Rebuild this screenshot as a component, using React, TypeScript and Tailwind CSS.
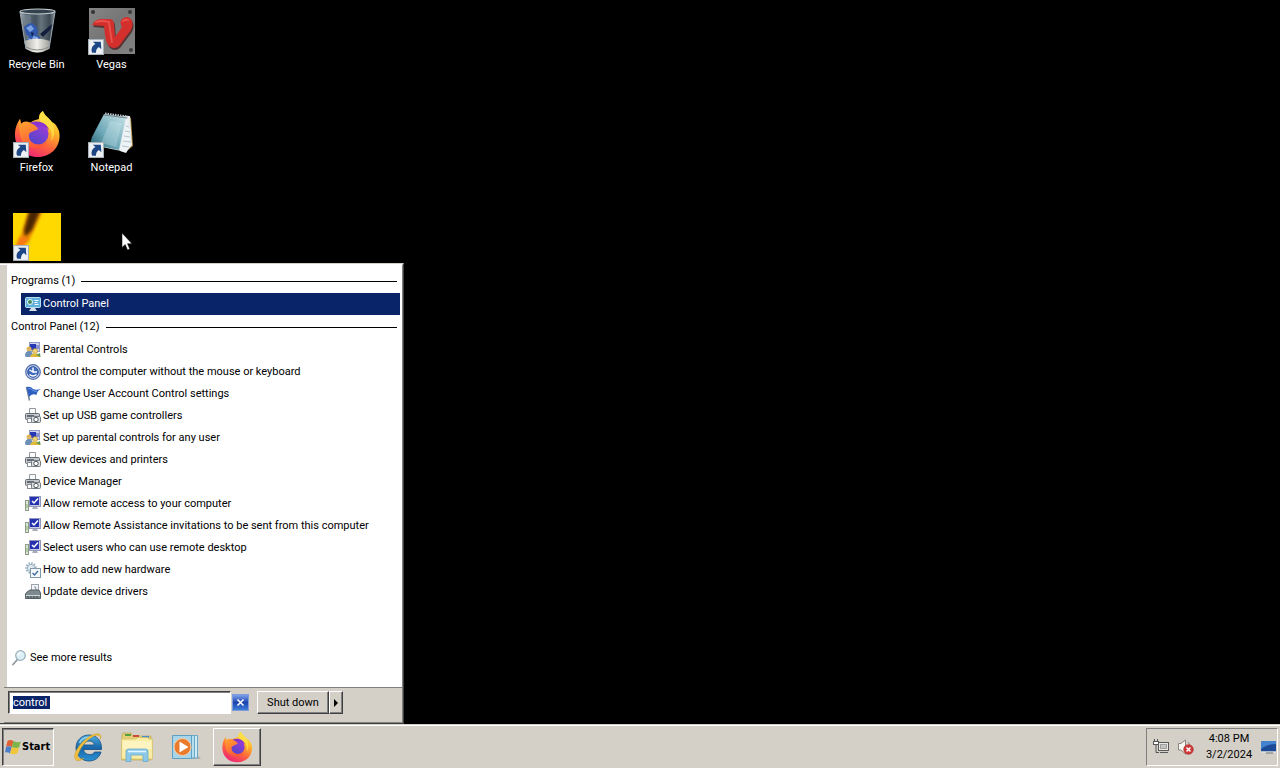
import { useEffect, useRef, useState } from "react";
import type { ReactNode } from "react";

type IconProps = { className?: string };

function RecycleBinIcon({ className }: IconProps) {
  return (
    <svg viewBox="0 0 48 48" className={className} aria-hidden="true">
      <defs>
        <linearGradient id="binGlass" x1="0" x2="1">
          <stop offset="0" stopColor="#a4afb6" />
          <stop offset=".15" stopColor="#5c6b76" />
          <stop offset=".45" stopColor="#42515c" />
          <stop offset=".6" stopColor="#66747e" />
          <stop offset=".85" stopColor="#3d4952" />
          <stop offset="1" stopColor="#8a969e" />
        </linearGradient>
        <linearGradient id="binBase" x1="0" x2="1">
          <stop offset="0" stopColor="#a8a8a4" />
          <stop offset=".5" stopColor="#f1f0ea" />
          <stop offset="1" stopColor="#9c9d9a" />
        </linearGradient>
      </defs>
      <path d="M7 4 L42 4 L36 42 Q24 49 13 42 Z" fill="url(#binGlass)" />
      <path d="M10 8 L18 8 L19 34 L14 34 Z" fill="#b8c6cf" opacity=".2" />
      <path d="M11 20 l4-3 4-1 4 3 2 5 -1 4 3 2 1 5 -5 3 -5-1 -4-3 2-4 -3-3z" fill="#3159ae" />
      <path d="M13 21 l5-3 3 4 -4 3z M20 29 l5 1 -1 5 -5-2z M15 31 l3 1 -1 3z" fill="#7ea3e3" />
      <path d="M18 25 l3 1 -2 4z" fill="#14244f" />
      <path d="M39 17 L27 27 L30 30 L38 22 Z" fill="#131f3d" />
      <path d="M11 34 Q24 29 37 34 L36 42 Q24 49 13 42 Z" fill="url(#binBase)" />
      <path d="M13 40 Q24 46 36 40" fill="none" stroke="#8c8c88" strokeWidth="1" />
      <ellipse cx="24.500" cy="4.500" rx="17.500" ry="2.500" fill="#34424d" stroke="#c5ced3" strokeWidth="1.200" />
      <path d="M7 5 L13 42 M42 5 L36 42" stroke="#9ba8b1" strokeWidth="1" />
    </svg>
  );
}

function VegasIcon({ className }: IconProps) {
  const letter =
    "M4 18 Q7 12 13 12 L21 12 Q26 12 26 17 L27 30 L34 20 Q31 15 34 12 Q39 8 43 12 Q46 16 43 23 L31 39 Q26 43 21 39 Q18 36 17 28 L16 19 Z";
  return (
    <svg viewBox="0 0 48 48" className={className} aria-hidden="true">
      <defs>
        <linearGradient id="vgPlate" x1="0" y1="0" x2="1" y2="1">
          <stop offset="0" stopColor="#858585" />
          <stop offset=".45" stopColor="#757675" />
          <stop offset="1" stopColor="#828382" />
        </linearGradient>
      </defs>
      <rect x="1" y="1" width="46" height="46" fill="url(#vgPlate)" />
      <circle cx="5" cy="5" r="2" fill="#343434" />
      <circle cx="42" cy="5" r="2" fill="#3d3d3d" />
      <circle cx="43" cy="43" r="2" fill="#3d3d3d" />
      <path d={letter} fill="#4d2222" transform="translate(1 2)" opacity=".8" />
      <path d={letter} fill="#d32f2c" />
      <path d="M8 15 Q13 13 21 15 Q22 24 24 35 M35 14 Q38 12 40 13" fill="none" stroke="#ea544d" strokeWidth="1.800" strokeLinecap="round" />
    </svg>
  );
}

function FirefoxIcon({ className }: IconProps) {
  return (
    <svg viewBox="0 0 48 48" className={className} aria-hidden="true">
      <defs>
        <linearGradient id="ffBody" x1=".8" y1="0" x2=".3" y2="1">
          <stop offset="0" stopColor="#fff14a" />
          <stop offset=".35" stopColor="#ffb329" />
          <stop offset=".65" stopColor="#ff653b" />
          <stop offset="1" stopColor="#ed207a" />
        </linearGradient>
        <linearGradient id="ffGlobe" x1=".8" y1="0" x2=".2" y2="1">
          <stop offset="0" stopColor="#a13bd8" />
          <stop offset="1" stopColor="#4c47c9" />
        </linearGradient>
        <linearGradient id="ffTail" x1="0" y1="0" x2=".4" y2="1">
          <stop offset="0" stopColor="#ffab2d" />
          <stop offset="1" stopColor="#ff5839" />
        </linearGradient>
      </defs>
      <path d="M30 1 C31 5 36 8 39 12 C42 13 44 16 46 21 C49 34 40 47 25 47 C11 47 2 37 2 25 C2 18 4 13 7 9 L8 14 C11 11 14 11 17 13 C22 8 27 11 26 7 C26 4 28 2 30 1Z" fill="url(#ffBody)" />
      <path d="M30 1 C31 6 37 8 39 13 C43 20 41 28 38 31 C41 21 35 15 29 13 C25 11 26 4 30 1Z" fill="#ffe34a" opacity=".75" />
      <circle cx="25" cy="24" r="10.500" fill="url(#ffGlobe)" />
      <path d="M7 9 L8 14 C12 11 17 12 20 14 C23 16 25 18 25 19 C22 21 18 21 16 24 C15 30 19 34 26 35 C31 35 34 31 34 31 C31 38 24 40 17 37 C10 34 7 29 7 23 C6 18 5 13 7 9Z" fill="url(#ffTail)" />
      <path d="M17 13 C27 9 34 14 36 20 C32 16 28 16 24 16Z" fill="#8a35cf" />
    </svg>
  );
}

function NotepadIcon({ className }: IconProps) {
  return (
    <svg viewBox="0 0 48 48" className={className} aria-hidden="true">
      <defs>
        <linearGradient id="npCover" x1="0" y1="1" x2="1" y2="0">
          <stop offset="0" stopColor="#1f5c6c" />
          <stop offset=".4" stopColor="#6ba6b5" />
          <stop offset="1" stopColor="#c9e5ea" />
        </linearGradient>
      </defs>
      <path d="M39 6 L43 8 L45 36 L40 40 Z" fill="#a8863a" />
      <path d="M35 6 L42 6 L44 35 L38 42 L14 37 Z" fill="#e8eef0" />
      <path d="M16 4 L38 7 L31 40 L2 34 L4 27 Z" fill="url(#npCover)" />
      <path d="M22 11 L34 13 L28 37 L13 33 Z" fill="#d7f0f5" opacity=".28" />
      <path d="M39 8 L32 41 L38 43 L43 35 Z" fill="#eef3f5" />
      <path d="M38 16 L41 17 M37 21 L42 22 M36 26 L42 27 M35 31 L43 32 M34 36 L41 37" stroke="#a5bac2" strokeWidth=".800" />
      <path d="M17 4 L40 7" stroke="#b9c5ca" strokeWidth="3" strokeDasharray="1.500 1" />
      <path d="M16 5 L39 8" stroke="#74868d" strokeWidth="1" />
    </svg>
  );
}

function YellowPictureIcon({ className }: IconProps) {
  return (
    <svg viewBox="0 0 48 48" className={className} aria-hidden="true">
      <defs>
        <filter id="soften" x="-30%" y="-30%" width="160%" height="160%">
          <feGaussianBlur stdDeviation="1.800" />
        </filter>
        <clipPath id="ypClip">
          <rect width="48" height="48" />
        </clipPath>
      </defs>
      <g clipPath="url(#ypClip)">
        <rect width="48" height="48" fill="#ffd900" />
        <path d="M16 -3 L30 -3 L15 30 L5 31 Z" fill="#e98a00" filter="url(#soften)" />
        <path d="M17 -4 L28 -4 L19 17 L12 24 L11 17 Z" fill="#4a2505" filter="url(#soften)" />
        <path d="M7 24 L15 24 L11 34 L2 34 Z" fill="#f77916" filter="url(#soften)" />
      </g>
    </svg>
  );
}

function ShortcutBadge() {
  return (
    <svg viewBox="0 0 15 15" className="absolute bottom-0 left-0 size-4" aria-hidden="true">
      <rect x=".5" y=".5" width="14" height="14" fill="#eef1f3" stroke="#a9b1b8" />
      <path d="M4.500 2.500 L12 2.500 L12.500 9.500 L10.200 7.600 C8 9 7.500 10.500 7.500 13 L4 13 C2.500 10 3.500 6.500 7 4.700 Z" fill="#1d4686" />
    </svg>
  );
}

function ControlPanelIcon() {
  return (
    <svg viewBox="0 0 16 16" className="size-4 shrink-0" aria-hidden="true">
      <rect x=".5" y="1.500" width="15" height="10" rx="1" fill="#5fb0dc" stroke="#b8e0f2" />
      <circle cx="5" cy="6" r="2.500" fill="#3e8a62" stroke="#eaf8fb" />
      <path d="M9.500 4.500 h4 M9.500 6.500 h3 M9.500 8.500 h4" stroke="#f4fcff" />
      <path d="M6 12 h4 l2 3 h-8z" fill="#d3dee5" />
    </svg>
  );
}

function ParentalIcon() {
  return (
    <svg viewBox="0 0 16 16" className="size-4 shrink-0" aria-hidden="true">
      <rect x="4.500" y=".500" width="10" height="9" fill="#cfd4ea" stroke="#9298c6" />
      <rect x="5" y="2" width="6" height="6" fill="#2938b5" />
      <rect x="11" y="3" width="3" height="4" fill="#8790d2" />
      <circle cx="4" cy="7" r="2.500" fill="#dfb65a" />
      <path d="M0 14 Q0 9 4 9 Q7 9 8 13 L7 15 H1Z" fill="#6d91b6" />
      <circle cx="10" cy="9" r="2.500" fill="#f0d375" stroke="#9d823b" strokeWidth=".500" />
      <path d="M5 15 Q6 11 10 11.500 Q15 11 15.500 15 Z" fill="#e0b83e" />
      <path d="M11 13 l4 -2 .5 4z" fill="#5c9857" />
    </svg>
  );
}

function AccessIcon() {
  return (
    <svg viewBox="0 0 16 16" className="size-4 shrink-0" aria-hidden="true">
      <circle cx="8" cy="8" r="7.300" fill="#c7d6f3" stroke="#536da8" strokeWidth="1.200" />
      <circle cx="8" cy="8" r="5.300" fill="#446dbe" stroke="#31549f" />
      <path d="M8 3.500 V8 H12 M4.500 6 L8 8 M4.500 10.500 Q8 13.500 11.500 10.500" fill="none" stroke="#fff" strokeWidth="1.400" />
    </svg>
  );
}

function FlagIcon() {
  return (
    <svg viewBox="0 0 16 16" className="size-4 shrink-0" aria-hidden="true">
      <path d="M1.500 1 L4.500 14.500" stroke="#738197" strokeWidth="1.500" />
      <path d="M1.500 1 Q6 0 8 3 Q11 4.500 15.500 3 Q12 5 11.500 9 Q7 7 4 11 Z" fill="#2d5fc0" />
      <path d="M3 2.500 Q6 2 8 4.500 Q10 6 12 5" fill="none" stroke="#6c96dc" />
    </svg>
  );
}

function PrinterIcon() {
  return (
    <svg viewBox="0 0 16 16" className="size-4 shrink-0" aria-hidden="true">
      <path d="M4.500 6 V.500 H10.500 V6" fill="#fbfbfb" stroke="#9298a0" />
      <rect x=".500" y="5.500" width="14" height="6" rx="1" fill="#c3c7cc" stroke="#656b73" />
      <path d="M2 8 H9" stroke="#454b53" strokeWidth="1.500" />
      <rect x="2.500" y="10.500" width="6" height="4" fill="#fff" stroke="#8a9097" />
      <rect x="6.500" y="8.500" width="9" height="6" rx="1" fill="#dde0e3" stroke="#757b82" />
      <circle cx="11" cy="11.500" r="2.200" fill="#fff" stroke="#50565d" />
    </svg>
  );
}

function RemoteIcon() {
  return (
    <svg viewBox="0 0 16 16" className="size-4 shrink-0" aria-hidden="true">
      <rect x=".500" y="4.500" width="3" height="10" fill="#dce6d4" stroke="#8d9b8a" />
      <path d="M2 8 v4" stroke="#8bb56d" />
      <rect x="4.500" y=".500" width="11" height="10" fill="#c9cce5" stroke="#9498bd" />
      <rect x="5" y="1" width="9" height="8" fill="#2431b0" />
      <path d="M7 5 L9 7 L13 2.500" fill="none" stroke="#fff" strokeWidth="1.500" />
      <path d="M8 11 h4 l1 2 h-6z" fill="#a8adb7" />
    </svg>
  );
}

function HardwareIcon() {
  return (
    <svg viewBox="0 0 16 16" className="size-4 shrink-0" aria-hidden="true">
      <circle cx="6" cy="6" r="4.500" fill="none" stroke="#9fb5c2" strokeWidth="2.500" strokeDasharray="1.500 1.100" />
      <circle cx="6" cy="6" r="3.500" fill="#e2edf2" stroke="#9bb2be" />
      <rect x="5.500" y="6.500" width="10" height="9" fill="#f5f9fb" stroke="#7f99a8" />
      <path d="M7.500 11 L9.500 13 L13 9" fill="none" stroke="#3d6a9a" strokeWidth="1.300" />
    </svg>
  );
}

function DriverIcon() {
  return (
    <svg viewBox="0 0 16 16" className="size-4 shrink-0" aria-hidden="true">
      <rect x="6.500" y=".500" width="7" height="9" fill="#f3f5f6" stroke="#9ba5ab" />
      <path d="M9 3 q2 -1 2 2 t-2 3" fill="none" stroke="#80929d" />
      <path d="M2 8 L5 6 H14 L15.500 9 V14.500 H.500 V10Z" fill="#7f8a8f" stroke="#566167" />
      <path d="M1 11.500 H15" stroke="#cfd6d9" />
      <path d="M3 12 v2 M6 12 v2 M9 12 v2 M12 12 v2" stroke="#41494d" />
    </svg>
  );
}

function MagnifierIcon() {
  return (
    <svg viewBox="0 0 16 16" className="size-4 shrink-0" aria-hidden="true">
      <path d="M6.500 9.500 L2 14.500" stroke="#90969a" strokeWidth="1.800" strokeLinecap="round" />
      <circle cx="9.500" cy="5.500" r="4.800" fill="#dbeff6" stroke="#9aaeb7" strokeWidth="1.200" />
      <path d="M6.500 5.500 Q7.500 3 10 3" fill="none" stroke="#fff" strokeWidth="1.500" />
    </svg>
  );
}

function WindowsFlagIcon() {
  return (
    <svg viewBox="0 0 16 16" className="size-4 shrink-0" aria-hidden="true">
      <path d="M2.500 2 Q5 0 8.500 2 L6.800 8 Q4 6 1 8Z" fill="#df6033" />
      <path d="M8.500 2 Q12 4 15.800 2.500 L14 8.500 Q11 9.500 6.800 8Z" fill="#7fb548" />
      <path d="M1 8 Q3.500 6.500 6.800 8 L5 14.500 Q2.500 12.500 0 13.500Z" fill="#4b7fc9" />
      <path d="M6.800 8 Q10 10 14 8.500 L12.300 14.500 Q9 16 5 14.500Z" fill="#f1c53a" />
    </svg>
  );
}

function ExplorerEIcon() {
  return (
    <svg viewBox="0 0 32 32" className="size-8" aria-hidden="true">
      <defs>
        <linearGradient id="ieBlue" x1="0" y1="0" x2="0" y2="1">
          <stop offset="0" stopColor="#4fb0e2" />
          <stop offset=".5" stopColor="#1766aa" />
          <stop offset="1" stopColor="#2b93d3" />
        </linearGradient>
      </defs>
      <path fillRule="evenodd" d="M17 4 C25 4 30 10 29.500 18.500 H11.500 C12 22 14.500 23.500 17.500 23.500 C20 23.500 21.500 23 22.500 21 H29 C27.500 26.500 23 30 17 30 C9.500 30 4 24.500 4 17 C4 9.500 9.500 4 17 4 Z M11.800 14 H22.300 C22 11.300 20 10 17.200 10 C14.500 10 12.300 11.500 11.800 14Z" fill="url(#ieBlue)" stroke="#124c82" strokeWidth=".800" />
      <path d="M7.500 12 Q10.500 6 17.500 6.300" fill="none" stroke="#98d8f3" strokeWidth="1.500" />
      <path d="M28.500 8 C30 4 28 1 20 4 C12 8 5 16 3 23 C1.500 29 5 32 12 27.500 C5 29 4.500 26 7 21 C10 14 15 9 21 5.500 C26 3 29 4 28.500 8Z" fill="#f2c03a" stroke="#c99a2c" strokeWidth=".500" />
    </svg>
  );
}

function FolderIcon() {
  return (
    <svg viewBox="0 0 34 32" className="h-8 w-[34px]" aria-hidden="true">
      <path d="M2 4 L3 2 H11 L13 5 H31 V29 H2Z" fill="#e5cf76" stroke="#b9a35a" strokeWidth=".700" />
      <rect x="5" y="3" width="6" height="2" fill="#54a045" />
      <rect x="13" y="4" width="6" height="2" fill="#c94b3a" />
      <rect x="22" y="5" width="7" height="2" fill="#4b8fcd" />
      <path d="M1.500 8 L15 8 L18 6.500 H28 L29 8 H32.500 V28 H1.500Z" fill="#f9eda5" stroke="#d3bb63" strokeWidth=".700" />
      <path d="M3 10 H31 V18 H3Z" fill="#fff8cd" opacity=".65" />
      <path d="M6 30.500 V20 Q6 18 9 18 H25 Q28 18 28 20 V30.500 H23 V24 H11 V30.500Z" fill="#8cc9e9" stroke="#6aa9cb" strokeWidth=".800" />
      <path d="M8 20.500 H26" stroke="#e2f6fe" strokeWidth="1.500" />
    </svg>
  );
}

function MediaPlayerIcon() {
  return (
    <svg viewBox="0 0 32 30" className="h-[30px] w-8" aria-hidden="true">
      <path d="M3 27 L31 27 L27 22Z" fill="#9f9b94" opacity=".6" />
      <path d="M9 3.500 H27.500 V26 H9Z" fill="#cfe9f5" stroke="#6aa9c6" />
      <path d="M6 3.500 H24.500 V26 H6Z" fill="#b7deef" stroke="#6aa9c6" />
      <path d="M2.500 3.500 H21.500 V26.500 H2.500Z" fill="#a9d5ea" stroke="#5fa0c0" />
      <circle cx="12.500" cy="15" r="8.500" fill="#ea7a2c" stroke="#f8d0a7" />
      <path d="M9.500 9.500 L18.500 15 L9.500 20.500Z" fill="#fff" />
    </svg>
  );
}

function NetworkIcon() {
  return (
    <svg viewBox="0 0 16 16" className="size-4" aria-hidden="true">
      <rect x="5.500" y="3.500" width="10" height="8" fill="#eceae6" stroke="#5a5a5a" />
      <rect x="7.500" y="5.500" width="6" height="4" fill="#c4c4c0" stroke="#a0a0a0" />
      <path d="M7 13.500 h8" stroke="#5a5a5a" />
      <path d="M1.500 0 v2 M4.500 0 v2" stroke="#555" />
      <rect x=".500" y="2.500" width="5" height="3" fill="#fff" stroke="#555" />
      <path d="M3 6 V13.500 H6" fill="none" stroke="#555" />
    </svg>
  );
}

function MutedIcon() {
  return (
    <svg viewBox="0 0 18 16" className="h-4 w-[18px]" aria-hidden="true">
      <path d="M1.500 4.500 H4 L8.500 1 V15 L4 11 H1.500Z" fill="#f8f7f3" stroke="#8a8781" />
      <path d="M11 3 Q13 5 13 8" fill="none" stroke="#8c8982" />
      <circle cx="11.500" cy="10.500" r="4.800" fill="#cf3838" stroke="#ad2525" strokeWidth=".600" />
      <path d="M9.500 8.500 l4 4 M13.500 8.500 l-4 4" stroke="#fff" strokeWidth="1.500" />
    </svg>
  );
}

function ShowDesktopIcon() {
  return (
    <svg viewBox="0 0 16 14" className="h-3.5 w-4" aria-hidden="true">
      <rect x="1" y="1" width="15" height="10.500" fill="#1c4a96" />
      <path d="M1 1 H16 V4 Q7 4 1 9Z" fill="#4482cf" />
      <path d="M1 12 H16" stroke="#e4e9ef" />
      <path d="M6 13 h7" stroke="#6f7277" />
    </svg>
  );
}

type DesktopItem = { label: string; icon: ReactNode; shortcut: boolean };

const iconClass = "size-12";

const desktopItems: DesktopItem[] = [
  { label: "Recycle Bin", icon: <RecycleBinIcon className={iconClass} />, shortcut: false },
  { label: "Firefox", icon: <FirefoxIcon className={iconClass} />, shortcut: true },
  { label: "", icon: <YellowPictureIcon className={iconClass} />, shortcut: true },
  { label: "Vegas", icon: <VegasIcon className={iconClass} />, shortcut: true },
  { label: "Notepad", icon: <NotepadIcon className={iconClass} />, shortcut: true },
];

const results: { label: string; icon: ReactNode }[] = [
  { label: "Parental Controls", icon: <ParentalIcon /> },
  { label: "Control the computer without the mouse or keyboard", icon: <AccessIcon /> },
  { label: "Change User Account Control settings", icon: <FlagIcon /> },
  { label: "Set up USB game controllers", icon: <PrinterIcon /> },
  { label: "Set up parental controls for any user", icon: <ParentalIcon /> },
  { label: "View devices and printers", icon: <PrinterIcon /> },
  { label: "Device Manager", icon: <PrinterIcon /> },
  { label: "Allow remote access to your computer", icon: <RemoteIcon /> },
  { label: "Allow Remote Assistance invitations to be sent from this computer", icon: <RemoteIcon /> },
  { label: "Select users who can use remote desktop", icon: <RemoteIcon /> },
  { label: "How to add new hardware", icon: <HardwareIcon /> },
  { label: "Update device drivers", icon: <DriverIcon /> },
];

function SectionHeading({ children }: { children: ReactNode }) {
  return (
    <h2 className="flex h-6 items-center gap-1.5 pl-1 pr-[5px]">
      {children}
      <span className="h-px flex-1 bg-black" />
    </h2>
  );
}

function ResultRow({ label, icon, selected = false }: { label: string; icon: ReactNode; selected?: boolean }) {
  return (
    <li className="pl-3.5 pr-0.5">
      <button
        type="button"
        className={
          selected
            ? "flex h-[22px] w-full items-center gap-0.5 bg-[#0a246a] pl-1 text-left text-white"
            : "flex h-[22px] w-full items-center gap-0.5 pl-1 text-left"
        }
      >
        {icon}
        {label}
      </button>
    </li>
  );
}

function StartMenu() {
  const [query, setQuery] = useState("control ");
  const searchBox = useRef<HTMLInputElement>(null);

  useEffect(() => {
    searchBox.current?.focus();
    searchBox.current?.select();
  }, []);

  return (
    <section
      aria-label="Start menu"
      className="absolute bottom-0 left-0 flex w-[404px] flex-col border-b border-r border-t border-b-[#404040] border-r-[#404040] border-t-[#d4d0c8] bg-[#d4d0c8]"
    >
      <div className="flex flex-col border-r border-t border-r-[#808080] border-t-white">
        <div className="ml-[7px] flex flex-col bg-white pt-1">
          <SectionHeading>Programs (1)</SectionHeading>
          <ul>
            <ResultRow label="Control Panel" icon={<ControlPanelIcon />} selected />
          </ul>
          <SectionHeading>Control Panel (12)</SectionHeading>
          <ul>
            {results.map((result) => (
              <ResultRow key={result.label} label={result.label} icon={result.icon} />
            ))}
          </ul>
          <button type="button" className="mb-[18px] mt-11 flex h-[22px] items-center gap-[3px] pl-1">
            <MagnifierIcon />
            See more results
          </button>
        </div>
        <div className="ml-1 flex items-center border-b border-t border-b-[#808080] border-t-[#808080] pb-2 pl-1 pt-[3px]">
          <input
            ref={searchBox}
            aria-label="Search programs and files"
            value={query}
            onChange={(event) => setQuery(event.target.value)}
            className="h-[23px] w-[223px] border border-b-white border-l-[#404040] border-r-white border-t-[#404040] bg-white pl-1 shadow-[inset_1px_1px_0_#808080] outline-none selection:bg-[#0a246a] selection:text-white"
          />
          <button
            type="button"
            aria-label="Clear search"
            className="ml-px flex size-[17px] items-center justify-center border border-[#7f9bdc] bg-linear-to-b from-[#7fa0ea] via-[#1d43b0] to-[#3f7fd8]"
          >
            <svg viewBox="0 0 9 9" className="size-[9px]" aria-hidden="true">
              <path d="M1.500 1.500 L7.500 7.500 M7.500 1.500 L1.500 7.500" stroke="#fff" strokeWidth="1.600" />
            </svg>
          </button>
          <button
            type="button"
            className="ml-2 h-[23px] w-[72px] border border-b-[#404040] border-l-white border-r-[#404040] border-t-white shadow-[inset_-1px_-1px_0_#808080]"
          >
            Shut down
          </button>
          <button
            type="button"
            aria-label="More shut down options"
            className="flex h-[23px] w-3.5 items-center justify-center border border-b-[#404040] border-l-white border-r-[#404040] border-t-white shadow-[inset_-1px_-1px_0_#808080]"
          >
            <svg viewBox="0 0 4 8" className="h-2 w-1" aria-hidden="true">
              <path d="M0 0 L4 4 L0 8Z" fill="#000" />
            </svg>
          </button>
        </div>
      </div>
    </section>
  );
}

function Taskbar() {
  return (
    <footer className="flex h-11 shrink-0 items-center border-t border-t-[#d4d0c8] bg-[#d4d0c8] px-0.5 pt-px shadow-[inset_0_1px_0_#fff]">
      <button
        type="button"
        className="flex h-[38px] w-[52px] items-center gap-px border border-b-white border-l-[#404040] border-r-white border-t-[#404040] pl-0.5 font-['DejaVu_Sans_Condensed','DejaVu_Sans',sans-serif] font-bold shadow-[inset_1px_1px_0_#808080]"
      >
        <WindowsFlagIcon />
        Start
      </button>
      <nav aria-label="Pinned programs" className="ml-[9px] flex items-center">
        <button type="button" aria-label="Internet Explorer" className="flex h-[38px] w-[49px] items-center justify-center">
          <ExplorerEIcon />
        </button>
        <button type="button" aria-label="Windows Explorer" className="flex h-[38px] w-[49px] items-center justify-center">
          <FolderIcon />
        </button>
        <button type="button" aria-label="Windows Media Player" className="flex h-[38px] w-[49px] items-center justify-center">
          <MediaPlayerIcon />
        </button>
        <button
          type="button"
          aria-label="Firefox"
          className="ml-[3px] flex h-[38px] w-12 items-center justify-center border border-b-[#404040] border-l-white border-r-[#404040] border-t-white shadow-[inset_-1px_-1px_0_#808080]"
        >
          <FirefoxIcon className="size-8" />
        </button>
      </nav>
      <div className="ml-auto flex h-[38px] w-[132px] items-center border border-b-white border-l-[#808080] border-r-white border-t-[#808080] pl-1.5 pr-px">
        <button type="button" aria-label="Network">
          <NetworkIcon />
        </button>
        <button type="button" aria-label="Volume muted" className="ml-2">
          <MutedIcon />
        </button>
        <time dateTime="2024-03-02T16:08" className="ml-2.5 w-12 text-center leading-4">
          <span className="block whitespace-nowrap">4:08 PM</span>
          <span className="block whitespace-nowrap">3/2/2024</span>
        </time>
        <button type="button" aria-label="Show desktop" className="ml-auto">
          <ShowDesktopIcon />
        </button>
      </div>
    </footer>
  );
}

export default function App() {
  return (
    <div className="flex h-screen flex-col overflow-hidden bg-black font-['Roboto',sans-serif] text-[11px] leading-4 text-black">
      <main className="relative flex-1">
        <ul className="grid grid-flow-col grid-rows-[repeat(3,103px)] justify-start pt-[7px] text-white">
          {desktopItems.map((item) => (
            <li key={item.label} className="flex w-[75px] flex-col items-center gap-0.5 pr-0.5">
              <div className="relative">
                {item.icon}
                {item.shortcut && <ShortcutBadge />}
              </div>
              <span>{item.label}</span>
            </li>
          ))}
        </ul>
        <StartMenu />
        <svg viewBox="0 0 12 19" className="absolute left-[121px] top-[232px] h-[19px] w-3" aria-hidden="true">
          <path d="M1 1 V15.500 L4.200 12.500 L6.500 18 L8.800 17 L6.500 11.700 H11Z" fill="#fff" stroke="#000" strokeWidth=".500" />
        </svg>
      </main>
      <Taskbar />
    </div>
  );
}
